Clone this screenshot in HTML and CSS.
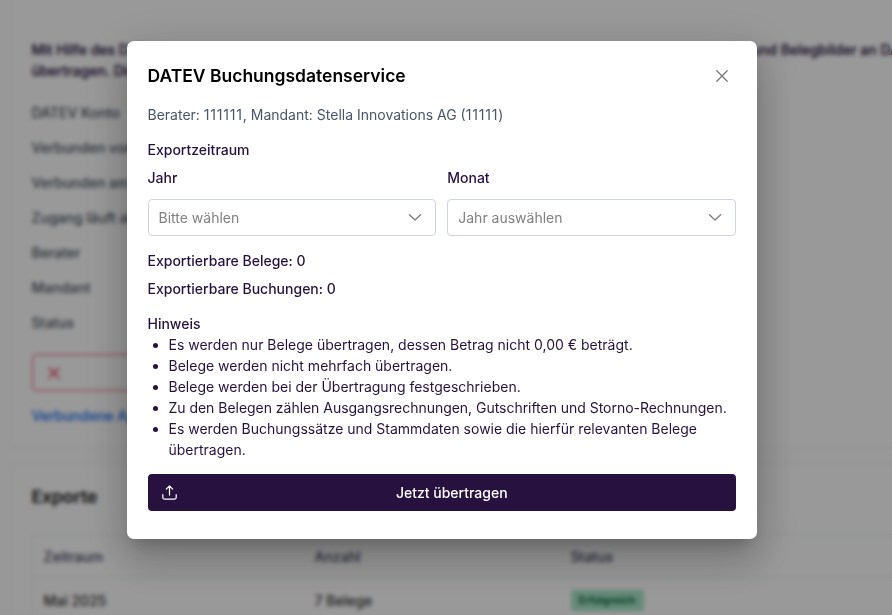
FILE: index.html
```html
<!DOCTYPE html>
<html lang="de">
<head>
<meta charset="utf-8">
<title>DATEV Buchungsdatenservice</title>
<link rel="stylesheet" href="styles.css">
</head>
<body>
<main class="page">
  <section class="card account">
    <div class="intro">
      <p>Mit Hilfe des DATEV</p>
      <p>und Belegbilder an DATEV</p>
      <p>übertragen. Die</p>
    </div>
    <dl class="details">
      <dt>DATEV Konto</dt>
      <dt>Verbunden von</dt>
      <dt>Verbunden am</dt>
      <dt>Zugang läuft ab</dt>
      <dt>Berater</dt>
      <dt>Mandant</dt>
      <dt>Status</dt>
    </dl>
    <div class="alert">
      <svg width="14" height="14" viewBox="0 0 14 14"><path d="M2 2l10 10M12 2L2 12"/></svg>
    </div>
    <a class="link">Verbundene App</a>
  </section>
  <section class="card exports">
    <h2>Exporte</h2>
    <div class="table">
      <div class="row head"><span>Zeitraum</span><span>Anzahl</span><span>Status</span></div>
      <div class="row"><span>Mai 2025</span><span>7 Belege</span><span><b class="badge">Erfolgreich</b></span></div>
    </div>
  </section>
</main>
<div class="overlay">
  <div class="modal" role="dialog">
    <header class="modal-head">
      <h1>DATEV Buchungsdatenservice</h1>
      <svg class="close" width="14" height="14" viewBox="0 0 14 14"><path d="M1.8 1.8l10.4 10.4M12.2 1.8L1.8 12.2"/></svg>
    </header>
    <p class="client">Berater: <span class="num">111111</span>, Mandant: Stella Innovations AG (<span class="num">11111</span>)</p>
    <p class="label period">Exportzeitraum</p>
    <div class="fields">
      <div class="field">
        <span class="label">Jahr</span>
        <div class="select"><span>Bitte wählen</span><svg width="14" height="14" viewBox="0 0 14 14"><path d="M1.4 3.8L7 8.9l5.6-5.1"/></svg></div>
      </div>
      <div class="field">
        <span class="label">Monat</span>
        <div class="select"><span>Jahr auswählen</span><svg width="14" height="14" viewBox="0 0 14 14"><path d="M1.4 3.8L7 8.9l5.6-5.1"/></svg></div>
      </div>
    </div>
    <p class="label receipts">Exportierbare Belege: 0</p>
    <p class="label bookings">Exportierbare Buchungen: 0</p>
    <p class="label hint">Hinweis</p>
    <ul>
      <li>Es werden nur Belege übertragen, dessen Betrag nicht 0,00 € beträgt.</li>
      <li>Belege werden nicht mehrfach übertragen.</li>
      <li>Belege werden bei der Übertragung festgeschrieben.</li>
      <li class="tight">Zu den Belegen zählen Ausgangsrechnungen, Gutschriften und Storno-Rechnungen.</li>
      <li>Es werden Buchungssätze und Stammdaten sowie die hierfür relevanten Belege übertragen.</li>
    </ul>
    <button class="submit" type="button">
      <svg width="15" height="15" viewBox="0 0 15 15"><path d="M.8 9.7v2.8c0 .9.6 1.5 1.5 1.5h10.4c.9 0 1.5-.6 1.5-1.5V9.7M7.5 10V1M4.3 4.1L7.5.9l3.2 3.2"/></svg>
      <span>Jetzt übertragen</span>
    </button>
  </div>
</div>
</body>
</html>
```
FILE: styles.css
```css
* { box-sizing: border-box; }
body {
  margin: 0;
  height: 615px;
  overflow: hidden;
  background: #fdfdfd;
  color: #27123f;
  font: 14px/21px Inter, sans-serif;
}
h1, h2, p, dl, ul { margin: 0; }
svg { fill: none; stroke: currentColor; stroke-linecap: round; stroke-linejoin: round; }

.page { width: 100%; height: 615px; overflow: hidden; padding-left: 10.5px; }
.card { border: 1px solid #f1f1f4; border-right: 0; border-radius: 6px 0 0 6px; background: #fff; padding: 0 0 0 20px; }
.account { height: 458px; margin-top: -10px; padding-top: 48px; }
.intro { display: grid; grid-template-columns: 720px 1fr; font-weight: 500; white-space: nowrap; -webkit-text-stroke: .2px; }
.details { display: grid; gap: 14px; margin-top: 21px; color: #4b5563; font-weight: 500; }
.alert {
  display: flex;
  align-items: center;
  width: 480px;
  height: 37px;
  margin: 21px 0 14px;
  padding-left: 14px;
  border: 1px solid #f04464;
  border-radius: 4px;
  color: #e8305a;
}
.alert svg { stroke-width: 1.6; }
.link { color: #2f7bf5; font-weight: 500; -webkit-text-stroke: .2px; }
.exports { height: 300px; margin-top: 15px; padding-top: 19px; }
h2 { color: #222; font-size: 17.5px; line-height: 27px; font-weight: 600; -webkit-text-stroke: .2px; }
.table { margin-top: 24px; border: 1px solid #e9edee; border-right: 0; font-weight: 500; color: #333; }
.row { display: grid; grid-template-columns: 271px 256px 1fr; align-items: center; height: 45px; padding-left: 11px; }
.head { height: 43px; border-bottom: 1px solid #dfe6e7; color: #42465f; }
.badge { display: block; width: 73px; border-radius: 3px; background: #a8e6cb; color: #136c40; text-align: center; font-size: 10.5px; }

.overlay {
  position: fixed;
  inset: 0;
  padding: 41px 135px 0 127px;
  background: rgba(0, 0, 0, .4);
  backdrop-filter: blur(2px);
}
.modal {
  height: 498px;
  padding: 21px 21px 21px 20.5px;
  border-radius: 7px;
  background: #fff;
  box-shadow: 0 11px 15px -7px rgba(0, 0, 0, .2), 0 24px 38px 3px rgba(0, 0, 0, .14), 0 9px 46px 8px rgba(0, 0, 0, .12);
}
.modal-head { display: flex; align-items: center; justify-content: space-between; height: 27px; padding-right: 7px; }
h1 { color: #000; font-size: 17.5px; line-height: 27px; font-weight: 600; }
.close { color: #777; stroke-width: 1.3; }
.client { margin-top: 15px; color: #495666; }
.num { letter-spacing: .8px; }
.label { display: block; font-weight: 500; }
.period { margin-top: 14px; }
.fields { display: grid; grid-template-columns: 1fr 1fr; gap: 11px; margin-top: 7px; }
.select {
  display: flex;
  align-items: center;
  justify-content: space-between;
  height: 37px;
  margin-top: 11px;
  padding: 0 13px 0 10px;
  border: 1px solid #ced4e0;
  border-radius: 4px;
  color: #808080;
}
.select svg { stroke-width: 1.4; }
.receipts { margin-top: 14px; }
.bookings { margin-top: 7px; }
.hint { margin-top: 14px; }
ul { padding-left: 21px; }
.tight { letter-spacing: -.03px; }
.submit {
  display: grid;
  grid-template-columns: 20px 1fr;
  align-items: center;
  width: 100%;
  height: 37px;
  margin-top: 14px;
  padding: 0 14px;
  border: 0;
  border-radius: 4px;
  background: #27123f;
  color: #fff;
  font: 500 14px/21px Inter, sans-serif;
}
.submit svg { stroke-width: 1.25; }
```
